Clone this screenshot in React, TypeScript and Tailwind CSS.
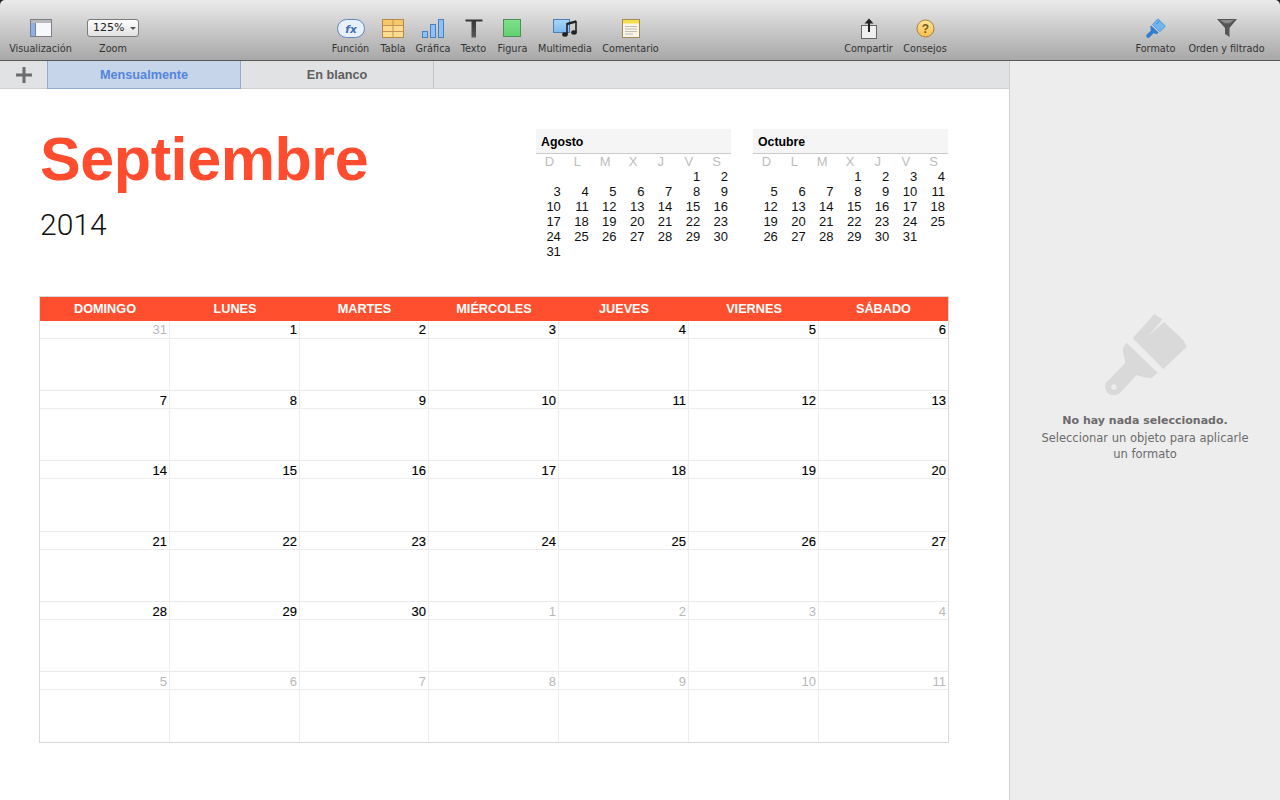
import React from "react";

const LUCIDA = "font-['DejaVu_Sans',sans-serif]";
const HELV = "font-['Liberation_Sans',sans-serif]";

function Tool({ label, icon, className = "" }: { label: string; icon: React.ReactNode; className?: string }) {
  return (
    <div className={`flex flex-col items-center shrink-0 ${className}`}>
      <div className="h-[20px] flex items-center justify-center">{icon}</div>
      <div className={`${LUCIDA} text-[9.7px] leading-[12px] mt-[4px] pt-[1px] text-[#333] whitespace-nowrap`}>{label}</div>
    </div>
  );
}

const IconView = (
  <svg width="22" height="18" viewBox="0 0 22 18">
    <rect x="0.5" y="0.5" width="21" height="17" fill="#f6f8fc" stroke="#7d7f84" />
    <rect x="1" y="1" width="20" height="3" fill="#b9babd" />
    <rect x="1" y="4" width="4.5" height="13" fill="#8fb0e6" />
    <line x1="5.5" y1="4" x2="5.5" y2="17" stroke="#6d85ad" />
  </svg>
);
const IconFx = (
  <svg width="28" height="19" viewBox="0 0 28 19">
    <rect x="0.5" y="0.5" width="27" height="18" rx="9" fill="#e8f0fb" stroke="#5f87c4" />
    <text x="14" y="13.5" textAnchor="middle" fontFamily="DejaVu Sans, sans-serif" fontStyle="italic" fontWeight="700" fontSize="10.5" fill="#3f6fb5">fx</text>
  </svg>
);
const IconTable = (
  <svg width="22" height="19" viewBox="0 0 22 19">
    <rect x="0.5" y="0.5" width="21" height="18" fill="#fbdc8e" stroke="#b8864a" />
    <rect x="1" y="1" width="20" height="5" fill="#f7c86a" />
    <line x1="1" y1="6.5" x2="21" y2="6.5" stroke="#c4925a" />
    <line x1="1" y1="12.5" x2="21" y2="12.5" stroke="#c4925a" />
    <line x1="11" y1="1" x2="11" y2="18" stroke="#c4925a" />
  </svg>
);
const IconChart = (
  <svg width="22" height="19" viewBox="0 0 22 19">
    <rect x="0.5" y="12.5" width="5" height="6" fill="#8fc0f2" stroke="#4a7fc0" />
    <rect x="8.5" y="5.5" width="5" height="13" fill="#8fc0f2" stroke="#4a7fc0" />
    <rect x="16.5" y="0.5" width="5" height="18" fill="#8fc0f2" stroke="#4a7fc0" />
  </svg>
);
const IconText = (
  <svg width="18" height="19" viewBox="0 0 18 19">
    <defs>
      <linearGradient id="textG" x1="0" y1="0" x2="0" y2="1">
        <stop offset="0" stopColor="#333333" />
        <stop offset="1" stopColor="#5a5a5a" />
      </linearGradient>
    </defs>
    <path d="M0.5 0.5H17.5V2.5H11V18.5H6.5V2.5H0.5Z" fill="url(#textG)" />
  </svg>
);
const IconShape = (
  <svg width="19" height="19" viewBox="0 0 19 19">
    <defs>
      <linearGradient id="shapeG" x1="0" y1="0" x2="0" y2="1">
        <stop offset="0" stopColor="#7fe08a" />
        <stop offset="1" stopColor="#62d070" />
      </linearGradient>
    </defs>
    <rect x="0.5" y="0.5" width="17" height="17" fill="url(#shapeG)" stroke="#4f8f58" />
  </svg>
);
const IconMedia = (
  <svg width="25" height="20" viewBox="0 0 25 20">
    <defs>
      <linearGradient id="mediaG" x1="0" y1="0" x2="0" y2="1">
        <stop offset="0" stopColor="#a9d6f7" />
        <stop offset="1" stopColor="#7db9ee" />
      </linearGradient>
    </defs>
    <rect x="0.5" y="1.5" width="16" height="13" fill="url(#mediaG)" stroke="#4d7fb5" />
    <path d="M14 4.7L23 2.2V4.8L14 7.3Z" fill="#222" />
    <path d="M14 5V16M23 3V14.5" stroke="#222" strokeWidth="1.6" />
    <ellipse cx="12" cy="16.5" rx="2.8" ry="2.2" fill="#222" />
    <ellipse cx="21" cy="14.5" rx="2.8" ry="2.2" fill="#222" />
  </svg>
);
const IconNote = (
  <svg width="18" height="19" viewBox="0 0 18 19">
    <rect x="0.5" y="0.5" width="17" height="18" fill="#f8f5e6" stroke="#a08a5c" />
    <rect x="1" y="1" width="16" height="3.5" fill="#f6df4c" />
    <path d="M3 7.5H15M3 10H15M3 12.5H15M3 15H11" stroke="#bdbdb5" />
  </svg>
);
const IconShare = (
  <svg width="18" height="21" viewBox="0 0 18 21">
    <rect x="1.5" y="7.5" width="15" height="13" fill="#efefef" stroke="#666" />
    <path d="M9 14V2" stroke="#222" strokeWidth="2" />
    <path d="M4.5 5.5L9 0.5L13.5 5.5Z" fill="#222" />
  </svg>
);
const IconTips = (
  <svg width="19" height="19" viewBox="0 0 19 19">
    <defs>
      <linearGradient id="tipG" x1="0" y1="0" x2="0" y2="1">
        <stop offset="0" stopColor="#fde59a" />
        <stop offset="1" stopColor="#f6be4c" />
      </linearGradient>
    </defs>
    <circle cx="9.5" cy="9.5" r="8.5" fill="url(#tipG)" stroke="#a77f35" />
    <text x="9.5" y="13.5" textAnchor="middle" fontFamily="Liberation Sans, sans-serif" fontWeight="700" fontSize="12" fill="#7a5a25">?</text>
  </svg>
);
const IconBrush = (
  <svg width="21" height="21" viewBox="240 30 270 270">
    <path d="M338 115L403 42L428 58L385 108L432 66L490 120L500 140L430 207Z" fill="#6fb6f0" stroke="#3a83cc" strokeWidth="8" />
    <path
      fillRule="evenodd"
      d="M320 128L413 218L395 235C380 232 362 232 350 225L300 279C285 293 255 285 255 258C256 248 262 243 270 236L315 190C316 175 305 150 310 140Z"
      fill="#2f7fd0"
    />
  </svg>
);
const IconFunnel = (
  <svg width="20" height="18" viewBox="0 0 20 18">
    <path d="M0 0H20L12.5 9V18L8 15V9Z" fill="#565656" />
    <path d="M3 1H17L12.5 4.2H7.5Z" fill="#8c8c8c" />
  </svg>
);

function Toolbar() {
  return (
    <div className="h-[61px] shrink-0 flex pl-[9px] pt-[18px] rounded-t-[5px] bg-gradient-to-b from-[#ebebeb] to-[#a8a8a8] border-b border-[#585858]">
      <Tool className="w-[63px]" label="Visualización" icon={IconView} />
      <Tool
        className="ml-[15px] w-[52px]"
        label="Zoom"
        icon={
          <div className={`${LUCIDA} w-[52px] h-[18px] rounded-[3px] border border-[#7b7b7b] bg-gradient-to-b from-[#fdfdfd] to-[#e2e2e2] flex items-center pl-[5px] text-[11px] text-[#222]`}>
            125%
            <span className="ml-[6px] w-0 h-0 border-x-[3px] border-x-transparent border-t-[3px] border-t-[#555]" />
          </div>
        }
      />
      <div className="flex gap-[10px] ml-[192px]">
        <Tool className="w-[39px]" label="Función" icon={IconFx} />
        <Tool className="w-[26px]" label="Tabla" icon={IconTable} />
        <Tool className="w-[34px]" label="Gráfica" icon={IconChart} />
        <Tool className="w-[27px]" label="Texto" icon={IconText} />
        <Tool className="w-[31px]" label="Figura" icon={IconShape} />
        <Tool className="w-[54px]" label="Multimedia" icon={IconMedia} />
        <Tool className="w-[57px]" label="Comentario" icon={IconNote} />
      </div>
      <div className="flex gap-[10px] ml-[185px]">
        <Tool className="w-[49px]" label="Compartir" icon={IconShare} />
        <Tool className="w-[44px]" label="Consejos" icon={IconTips} />
      </div>
      <div className="flex gap-[12px] ml-auto pr-[15px]">
        <Tool className="w-[41px]" label="Formato" icon={IconBrush} />
        <Tool className="w-[77px]" label="Orden y filtrado" icon={IconFunnel} />
      </div>
    </div>
  );
}

function TabBar() {
  return (
    <div className={`${HELV} h-[28px] shrink-0 flex bg-[#e1e2e4] border-b border-[#cfcfcf] text-[12.7px] font-bold`}>
      <div className="w-[47px] flex items-center justify-center">
        <svg width="16" height="16" viewBox="0 0 16 16">
          <path d="M6.5 0H9.5V6.5H16V9.5H9.5V16H6.5V9.5H0V6.5H6.5Z" fill="#6b6b6b" />
        </svg>
      </div>
      <div className="w-[194px] h-[28px] pt-[2px] flex items-center justify-center bg-[#c6d5e9] border-x border-b border-[#8fabd2] text-[#5584dc]">
        Mensualmente
      </div>
      <div className="w-[193px] pt-[2px] flex items-center justify-center border-r border-[#c4c4c4] text-[#5e5e5e]">En blanco</div>
    </div>
  );
}

function MiniCal({ title, blanks, days }: { title: string; blanks: number; days: number }) {
  const letters = ["D", "L", "M", "X", "J", "V", "S"];
  const cells: (number | null)[] = [...Array(blanks).fill(null), ...Array.from({ length: days }, (_, i) => i + 1)];
  return (
    <div className={`${HELV} w-[195px] text-[13px] leading-[15px]`}>
      <div className="h-[25px] pt-[2px] bg-[#f5f5f5] border-b border-[#cacaca] pl-[5px] flex items-center font-bold text-[12.3px] text-black">{title}</div>
      <div className="grid grid-cols-7 h-[15px] text-[#bdbdbd]">
        {letters.map((l) => (
          <div key={l} className="text-center pr-[1px]">{l}</div>
        ))}
      </div>
      <div className="grid grid-cols-7 text-[#111]">
        {cells.map((c, i) => (
          <div key={i} className="h-[15px] text-right pr-[3px]">{c ?? ""}</div>
        ))}
      </div>
    </div>
  );
}

const DAYS = ["DOMINGO", "LUNES", "MARTES", "MIÉRCOLES", "JUEVES", "VIERNES", "SÁBADO"];
const WEEKS: [number, boolean][][] = [
  [[31, true], [1, false], [2, false], [3, false], [4, false], [5, false], [6, false]],
  [7, 8, 9, 10, 11, 12, 13].map((n) => [n, false] as [number, boolean]),
  [14, 15, 16, 17, 18, 19, 20].map((n) => [n, false] as [number, boolean]),
  [21, 22, 23, 24, 25, 26, 27].map((n) => [n, false] as [number, boolean]),
  [[28, false], [29, false], [30, false], [1, true], [2, true], [3, true], [4, true]],
  [5, 6, 7, 8, 9, 10, 11].map((n) => [n, true] as [number, boolean]),
];
const COLS = "grid grid-cols-[130px_130px_129px_130px_130px_130px_129px]";

function MonthTable() {
  return (
    <div className={`${HELV} ml-[39px] w-[910px] border border-[#d9d9d9]`}>
      <div className={`${COLS} h-[24px] pt-[2px] bg-[#ff4f2e] items-center text-white font-bold text-[12.7px]`}>
        {DAYS.map((d) => (
          <div key={d} className="text-center">{d}</div>
        ))}
      </div>
      <div className="grid grid-rows-[70px_70px_71px_70px_70px_70px] h-[421px]">
        {WEEKS.map((w, i) => (
          <div key={i} className={`${COLS} ${i < 5 ? "border-b border-[#ebebeb]" : ""}`}>
            {w.map(([n, muted], j) => (
              <div key={j} className={j < 6 ? "border-r border-[#ededed]" : ""}>
                <div className={`h-[18px] border-b border-[#ededed] text-right pr-[2px] text-[13px] ${i === 0 ? "leading-[18px]" : "leading-[20px]"} ${muted ? "text-[#b8b8b8]" : "text-black [-webkit-text-stroke:0.15px_#000]"}`}>
                  {n}
                </div>
              </div>
            ))}
          </div>
        ))}
      </div>
    </div>
  );
}

function Sidebar() {
  return (
    <div className="w-[271px] shrink-0 bg-[#ededed] border-l border-[#cfcfcf] flex flex-col items-center pt-[249px]">
      <svg width="90" height="90" viewBox="240 30 270 270" className="shrink-0">
        <path d="M338 115L403 42L428 58L385 108L432 66L490 120L500 140L430 207Z" fill="#d9d9d9" />
        <path
          fillRule="evenodd"
          d="M320 128L413 218L395 235C380 232 362 232 350 225L300 279C285 293 255 285 255 258C256 248 262 243 270 236L315 190C316 175 305 150 310 140Z M282 253A8 8 0 1 0 282 269A8 8 0 1 0 282 253Z"
          fill="#d9d9d9"
        />
      </svg>
      <div className={`${LUCIDA} mt-[13px] text-[11px] leading-[16px] font-bold text-[#6b6b6b]`}>No hay nada seleccionado.</div>
      <div className={`${LUCIDA} mt-[1px] w-[220px] text-center text-[11.5px] leading-[16px] text-[#6b6b6b]`}>
        Seleccionar un objeto para aplicarle un formato
      </div>
    </div>
  );
}

export default function App() {
  return (
    <div className="w-[1280px] h-[800px] overflow-hidden bg-[#222] flex flex-col">
      <Toolbar />
      <div className="flex flex-1 min-h-0">
        <div className="flex-1 min-w-0 flex flex-col bg-white">
          <TabBar />
          <div className="ml-[40px] w-[908px] h-[207px] pt-[40px] flex">
            <div className="flex-1 min-w-0">
              <div className={`${HELV} font-bold text-[61px] leading-[64px] tracking-[-0.4px] text-[#ff4b2e] -mt-[2px]`}>Septiembre</div>
              <div className="font-['Roboto',sans-serif] font-light text-[30px] leading-[36px] text-[#111] mt-[16px]">2014</div>
            </div>
            <div className="flex gap-[22px]">
              <MiniCal title="Agosto" blanks={5} days={31} />
              <MiniCal title="Octubre" blanks={3} days={31} />
            </div>
          </div>
          <MonthTable />
        </div>
        <Sidebar />
      </div>
    </div>
  );
}
